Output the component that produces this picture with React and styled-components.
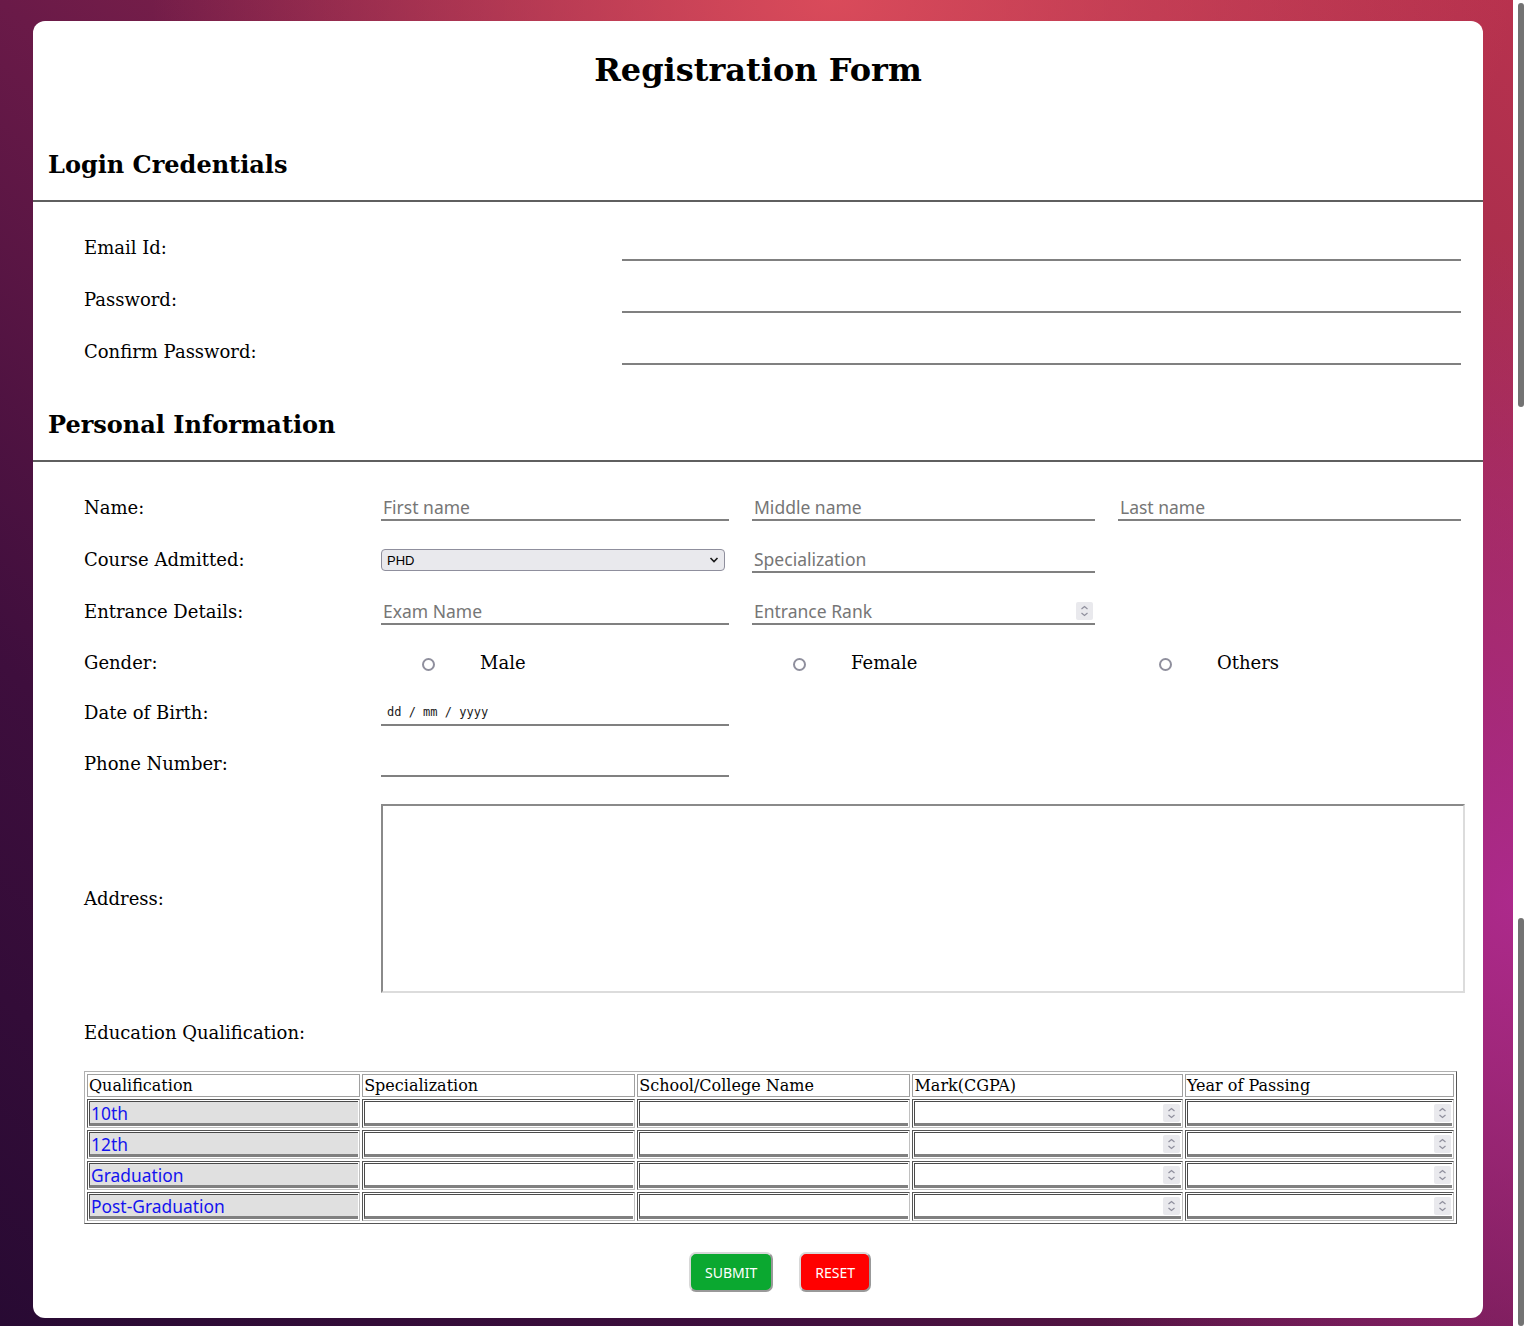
import React from "react";
import styled, { createGlobalStyle } from "styled-components";

const GlobalStyle = createGlobalStyle`
  html, body {
    margin: 0;
    padding: 0;
  }
  body {
    font-family: "DejaVu Serif", "Liberation Serif", serif;
    color: #000;
  }
`;

const Spinner = () => (
  <svg width="17" height="18" viewBox="0 0 17 18">
    <rect x="0" y="0" width="17" height="18" rx="2" fill="#e9e9ed" />
    <polyline points="5.5,7 8.5,4.5 11.5,7" fill="none" stroke="#8f8f9d" strokeWidth="1.2" />
    <polyline points="5.5,11 8.5,13.5 11.5,11" fill="none" stroke="#8f8f9d" strokeWidth="1.2" />
  </svg>
);

const Chevron = () => (
  <svg width="10" height="8" viewBox="0 0 10 8">
    <polyline points="1.5,2 5,5.5 8.5,2" fill="none" stroke="#1a1a1a" strokeWidth="1.6" />
  </svg>
);

const NumberField = ({ placeholder, table }) => (
  <NumberWrap>
    {table ? (
      <CellInput type="number" />
    ) : (
      <LineInput type="number" placeholder={placeholder} />
    )}
    <SpinBox $table={table}>
      <Spinner />
    </SpinBox>
  </NumberWrap>
);

const qualifications = ["10th", "12th", "Graduation", "Post-Graduation"];
const columns = [
  "Qualification",
  "Specialization",
  "School/College Name",
  "Mark(CGPA)",
  "Year of Passing",
];

const App = () => {
  return (
    <Page>
      <GlobalStyle />
      <Backdrop>
        <Card onSubmit={(e) => e.preventDefault()}>
          <Title>Registration Form</Title>

          <SectionTitle $top={63}>Login Credentials</SectionTitle>
          <Rows>
            <FieldRow $cols="515px 1fr">
              <Label>Email Id:</Label>
              <LineInput type="email" />
            </FieldRow>
            <FieldRow $cols="515px 1fr">
              <Label>Password:</Label>
              <LineInput type="password" />
            </FieldRow>
            <FieldRow $cols="515px 1fr">
              <Label>Confirm Password:</Label>
              <LineInput type="password" />
            </FieldRow>
          </Rows>

          <SectionTitle $top={33}>Personal Information</SectionTitle>
          <Rows>
            <FieldRow $cols="274px 348px 343px 343px">
              <Label>Name:</Label>
              <LineInput placeholder="First name" />
              <LineInput placeholder="Middle name" />
              <LineInput placeholder="Last name" />
            </FieldRow>
            <FieldRow $cols="274px 348px 343px 343px">
              <Label>Course Admitted:</Label>
              <SelectWrap>
                <Select defaultValue="PHD">
                  <option>PHD</option>
                  <option>M.Tech</option>
                  <option>MBA</option>
                </Select>
                <SelectArrow>
                  <Chevron />
                </SelectArrow>
              </SelectWrap>
              <LineInput placeholder="Specialization" />
            </FieldRow>
            <FieldRow $cols="274px 348px 343px 343px">
              <Label>Entrance Details:</Label>
              <LineInput placeholder="Exam Name" />
              <NumberField placeholder="Entrance Rank" />
            </FieldRow>
            <FieldRow $cols="274px 348px 343px 343px" $h={49}>
              <Label>Gender:</Label>
              <RadioOption>
                <Radio type="radio" name="gender" />
                <Label>Male</Label>
              </RadioOption>
              <RadioOption>
                <Radio type="radio" name="gender" />
                <Label>Female</Label>
              </RadioOption>
              <RadioOption>
                <Radio type="radio" name="gender" />
                <Label>Others</Label>
              </RadioOption>
            </FieldRow>
            <FieldRow $cols="274px 348px 343px 343px" $h={51}>
              <Label>Date of Birth:</Label>
              <DateInput placeholder="dd / mm / yyyy" />
            </FieldRow>
            <FieldRow $cols="274px 348px 343px 343px">
              <Label>Phone Number:</Label>
              <LineInput type="tel" />
            </FieldRow>
            <FieldRow $cols="274px 1084px" $h={189} $top={14} $right={18}>
              <Label>Address:</Label>
              <Address />
            </FieldRow>
            <FieldRow $cols="1fr" $top={14}>
              <Label>Education Qualification:</Label>
            </FieldRow>
          </Rows>

          <TableWrap>
            <EduTable>
              <colgroup>
                <col style={{ width: "20.1%" }} />
                <col style={{ width: "20.1%" }} />
                <col style={{ width: "20.1%" }} />
                <col style={{ width: "19.9%" }} />
                <col style={{ width: "19.8%" }} />
              </colgroup>
              <thead>
                <tr>
                  {columns.map((c) => (
                    <HeadCell key={c}>{c}</HeadCell>
                  ))}
                </tr>
              </thead>
              <tbody>
                {qualifications.map((q) => (
                  <tr key={q}>
                    <BodyCell>
                      <CellInput $fixed readOnly value={q} />
                    </BodyCell>
                    <BodyCell>
                      <CellInput />
                    </BodyCell>
                    <BodyCell>
                      <CellInput />
                    </BodyCell>
                    <BodyCell>
                      <NumberField table />
                    </BodyCell>
                    <BodyCell>
                      <NumberField table />
                    </BodyCell>
                  </tr>
                ))}
              </tbody>
            </EduTable>
          </TableWrap>

          <ButtonBar>
            <ActionButton type="submit" $bg="#0ba830">SUBMIT</ActionButton>
            <ActionButton type="reset" $bg="#ff0000">RESET</ActionButton>
          </ButtonBar>
        </Card>
      </Backdrop>
      <ScrollTrack>
        <Thumb $h={404} />
        <Thumb $h={408} />
      </ScrollTrack>
    </Page>
  );
};

export default App;

const Page = styled.div`
  display: flex;
  height: 1326px;
  overflow: hidden;
`;

const Backdrop = styled.div`
  flex: 1;
  padding: 21px 30px 0 33px;
  background:
    radial-gradient(ellipse 45% 30% at 55% 0%, rgba(224, 78, 92, 0.9) 0%, rgba(224, 78, 92, 0) 100%),
    radial-gradient(ellipse 35% 50% at 100% 68%, rgba(176, 42, 146, 0.9) 0%, rgba(176, 42, 146, 0) 100%),
    linear-gradient(to top right, #280a33 0%, #3e0e3d 25%, #6a1a48 50%, #9a2a4c 75%, #b8324e 100%);
`;

const Card = styled.form`
  background: #fff;
  border-radius: 12px;
  padding: 31px 0 26px;
`;

const Title = styled.h1`
  margin: 0;
  text-align: center;
  font-size: 32px;
  line-height: 36px;
  font-weight: bold;
`;

const SectionTitle = styled.h2`
  margin: ${(p) => p.$top}px 0 0;
  padding: 0 15px 21px;
  font-size: 24px;
  line-height: 28px;
  font-weight: bold;
  border-bottom: 2px solid #5f5f5f;
`;

const Rows = styled.div`
  margin-top: 20px;
`;

const FieldRow = styled.div`
  display: grid;
  grid-template-columns: ${(p) => p.$cols};
  column-gap: 23px;
  align-items: center;
  height: ${(p) => p.$h || 52}px;
  margin-top: ${(p) => p.$top || 0}px;
  padding: 0 ${(p) => p.$right || 22}px 0 51px;
`;

const Label = styled.span`
  font-size: 18px;
  line-height: 22px;
`;

const LineInput = styled.input`
  box-sizing: border-box;
  width: 100%;
  height: 26px;
  border: none;
  border-bottom: 2px solid #808080;
  background: transparent;
  padding: 0 2px;
  font-family: "Noto Sans", "DejaVu Sans", sans-serif;
  font-size: 17.5px;
  color: #222;
  outline: none;
  appearance: textfield;

  &::placeholder {
    color: #767676;
  }
  &::-webkit-inner-spin-button,
  &::-webkit-outer-spin-button {
    -webkit-appearance: none;
    margin: 0;
  }
`;

const DateInput = styled(LineInput)`
  padding-left: 6px;
  font-family: "DejaVu Sans Mono", "Liberation Mono", monospace;
  font-size: 12px;

  &::placeholder {
    color: #1a1a1a;
  }
`;

const NumberWrap = styled.div`
  position: relative;
  width: 100%;
`;

const SpinBox = styled.div`
  position: absolute;
  right: ${(p) => (p.$table ? 1 : 2)}px;
  top: ${(p) => (p.$table ? 3 : 3)}px;
  display: flex;
  pointer-events: none;
`;

const SelectWrap = styled.div`
  position: relative;
  width: 344px;
`;

const Select = styled.select`
  box-sizing: border-box;
  width: 100%;
  height: 22px;
  appearance: none;
  background: #e9e9ed;
  border: 1px solid #8f8f9d;
  border-radius: 4px;
  padding: 0 20px 0 5px;
  font-family: "Liberation Sans", Arial, sans-serif;
  font-size: 13px;
  color: #000;
  outline: none;
`;

const SelectArrow = styled.span`
  position: absolute;
  right: 6px;
  top: 7px;
  display: flex;
  pointer-events: none;
`;

const RadioOption = styled.label`
  display: flex;
  align-items: center;
  gap: 45px;
  padding-left: 41px;
`;

const Radio = styled.input`
  appearance: none;
  box-sizing: border-box;
  width: 13px;
  height: 13px;
  margin: 3px 0 0;
  border: 2px solid #8f8f9d;
  border-radius: 50%;
  background: #fff;
`;

const Address = styled.textarea`
  box-sizing: border-box;
  width: 1084px;
  height: 189px;
  border: 2px solid;
  border-color: #8a8a8a #dcdcdc #dcdcdc #8a8a8a;
  resize: none;
  outline: none;
`;

const TableWrap = styled.div`
  margin: 12px 26px 0 51px;
`;

const EduTable = styled.table`
  width: 100%;
  table-layout: fixed;
  border-collapse: separate;
  border-spacing: 2px;
  border: 1px solid;
  border-color: #b0b0b0 #555 #555 #b0b0b0;
`;

const HeadCell = styled.th`
  text-align: left;
  font-weight: normal;
  font-size: 16px;
  line-height: 19px;
  padding: 1px;
  border: 1px solid;
  border-color: #a0a0a0;
`;

const BodyCell = styled.td`
  padding: 1px;
  border: 1px solid;
  border-color: #555 #c0c0c0 #c0c0c0 #555;
`;

const CellInput = styled.input`
  display: block;
  box-sizing: border-box;
  width: 100%;
  height: 25px;
  border: none;
  border-top: 1px solid #4a4a4a;
  border-left: 1px solid #4a4a4a;
  border-bottom: 3px solid #808080;
  padding: 0 1px;
  background: ${(p) => (p.$fixed ? "#e0e0e0" : "#fff")};
  color: #1414ee;
  font-family: "Noto Sans", "DejaVu Sans", sans-serif;
  font-size: 17.4px;
  outline: none;
  appearance: textfield;

  &::-webkit-inner-spin-button,
  &::-webkit-outer-spin-button {
    -webkit-appearance: none;
    margin: 0;
  }
`;

const ButtonBar = styled.div`
  display: flex;
  justify-content: center;
  gap: 26px;
  margin-top: 28px;
  padding-left: 44px;
`;

const ActionButton = styled.button`
  height: 40px;
  padding: 0 14px;
  border: 2px solid;
  border-color: #d8d8d8 #999 #999 #d8d8d8;
  border-radius: 7px;
  background: ${(p) => p.$bg};
  color: #fff;
  font-family: "Noto Sans", "DejaVu Sans", sans-serif;
  font-size: 14px;
  cursor: pointer;
`;

const ScrollTrack = styled.div`
  width: 15px;
  background: #fff;
  display: flex;
  flex-direction: column;
  justify-content: space-between;
  padding-top: 3px;
  box-sizing: border-box;
  align-items: center;
`;

const Thumb = styled.div`
  width: 6px;
  height: ${(p) => p.$h}px;
  border-radius: 3px;
  background: #737373;
`;
